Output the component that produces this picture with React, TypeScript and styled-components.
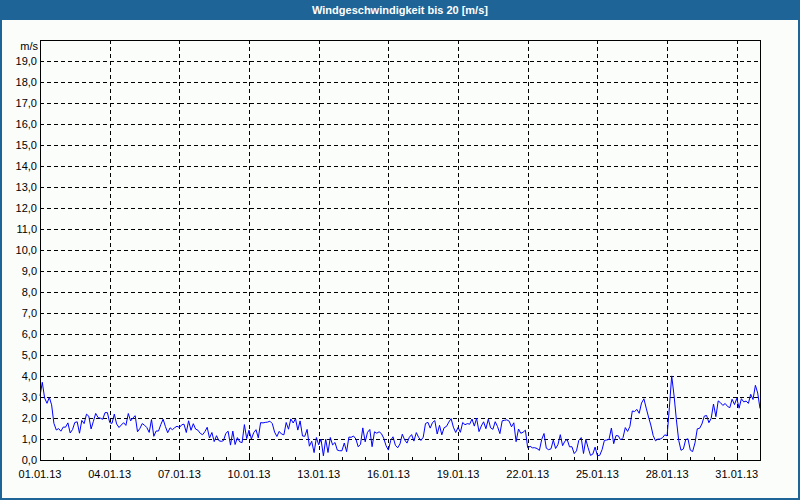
import React from 'react';
import styled, { createGlobalStyle } from 'styled-components';

const Global = createGlobalStyle`
  html, body { margin: 0; padding: 0; background: #ffffff; }
  body { font-family: "Liberation Sans", Arial, sans-serif; }
`;

const Frame = styled.div`
  width: 800px;
  height: 500px;
  display: flex;
  flex-direction: column;
  box-sizing: border-box;
`;

const TitleBar = styled.div`
  height: 20px;
  background: #1e6496;
  color: #ffffff;
  font-size: 11px;
  font-weight: bold;
  display: flex;
  align-items: center;
  justify-content: center;
`;

const Body = styled.div`
  flex: 1;
  border: 2px solid #1e6496;
  border-top: none;
  background: #fbfdfb;
  display: flex;
`;

// chart coordinates are page coordinates, offset by the frame
const OX = 2;
const OY = 20;
const L = 40, R = 760, T = 40, B = 460;
const DAY = (R - L) / 31;
const yOf = (v: number) => B - v * 21;

const ctrl: [number, number][] = [
  [0, 3.5], [0.5, 2.6], [0.7, 1.2], [1, 1.4], [2, 1.8], [3, 1.9], [4, 1.8], [5, 1.5],
  [6, 1.7], [7, 1.2], [8, 1.0], [9, 1.3], [10, 1.5], [11, 1.8], [11.5, 1.1], [12, 0.6],
  [13, 0.7], [14, 1.2], [15, 0.7], [16, 1.0], [17, 1.5], [18, 1.6], [19, 1.8], [20, 1.6],
  [21, 1.0], [22, 0.8], [23, 0.7], [24, 0.5], [24.5, 1.0], [25, 1.4], [26, 2.5],
  [26.5, 1.0], [27, 1.0], [27.2, 3.8], [27.5, 0.5], [28, 0.6], [29, 2.4], [30, 2.6],
  [30.8, 3.2], [31, 2.6],
];

function base(d: number) {
  for (let i = 0; i < ctrl.length - 1; i++) {
    const [a, va] = ctrl[i];
    const [b, vb] = ctrl[i + 1];
    if (d >= a && d <= b) return va + ((d - a) / (b - a)) * (vb - va);
  }
  return 2.6;
}

let seed = 7;
const rnd = () => {
  seed = (seed * 16807) % 2147483647;
  return seed / 2147483647;
};

const points: string[] = [];
for (let d = 0; d <= 31.001; d += 0.1) {
  const v = Math.max(0.2, base(d) + (rnd() - 0.5) * 0.9);
  points.push(`${(L + d * DAY).toFixed(1)},${yOf(v).toFixed(1)}`);
}

const Label = styled.text`
  font-family: "Liberation Sans", Arial, sans-serif;
  font-size: 11px;
  fill: #000;
`;

export default function App() {
  const yLines = Array.from({ length: 19 }, (_, i) => i + 1);
  const xMajor = Array.from({ length: 11 }, (_, i) => i * 3);
  const xTicks = Array.from({ length: 32 }, (_, i) => i);
  return (
    <>
      <Global />
      <Frame>
        <TitleBar>Windgeschwindigkeit bis 20 [m/s]</TitleBar>
        <Body>
          <svg width={796} height={478}>
            <g transform={`translate(${-OX},${-OY})`}>
              {yLines.map(v => (
                <line key={v} x1={L} x2={R} y1={yOf(v) + 0.5} y2={yOf(v) + 0.5}
                  stroke="#000" strokeDasharray="4 3" />
              ))}
              {xMajor.slice(1).map(d => (
                <line key={d} x1={Math.round(L + d * DAY) + 0.5} x2={Math.round(L + d * DAY) + 0.5}
                  y1={T} y2={B} stroke="#000" strokeDasharray="4 3" />
              ))}
              {xTicks.map(d => (
                <line key={d} x1={Math.round(L + d * DAY) + 0.5} x2={Math.round(L + d * DAY) + 0.5}
                  y1={B - 3} y2={B} stroke="#000" />
              ))}
              <polyline points={points.join(' ')} fill="none" stroke="#0000ff" strokeWidth={1} />
              <rect x={L + 0.5} y={T + 0.5} width={R - L} height={B - T} fill="none" stroke="#000" />
              <Label x={38} y={50} textAnchor="end">m/s</Label>
              {[0, ...yLines].map(v => (
                <Label key={v} x={37} y={yOf(v) + 4} textAnchor="end">
                  {v.toFixed(1).replace('.', ',')}
                </Label>
              ))}
              {xMajor.map(d => (
                <Label key={d} x={L + d * DAY} y={478} textAnchor="middle">
                  {String(d + 1).padStart(2, '0')}.01.13
                </Label>
              ))}
            </g>
          </svg>
        </Body>
      </Frame>
    </>
  );
}
